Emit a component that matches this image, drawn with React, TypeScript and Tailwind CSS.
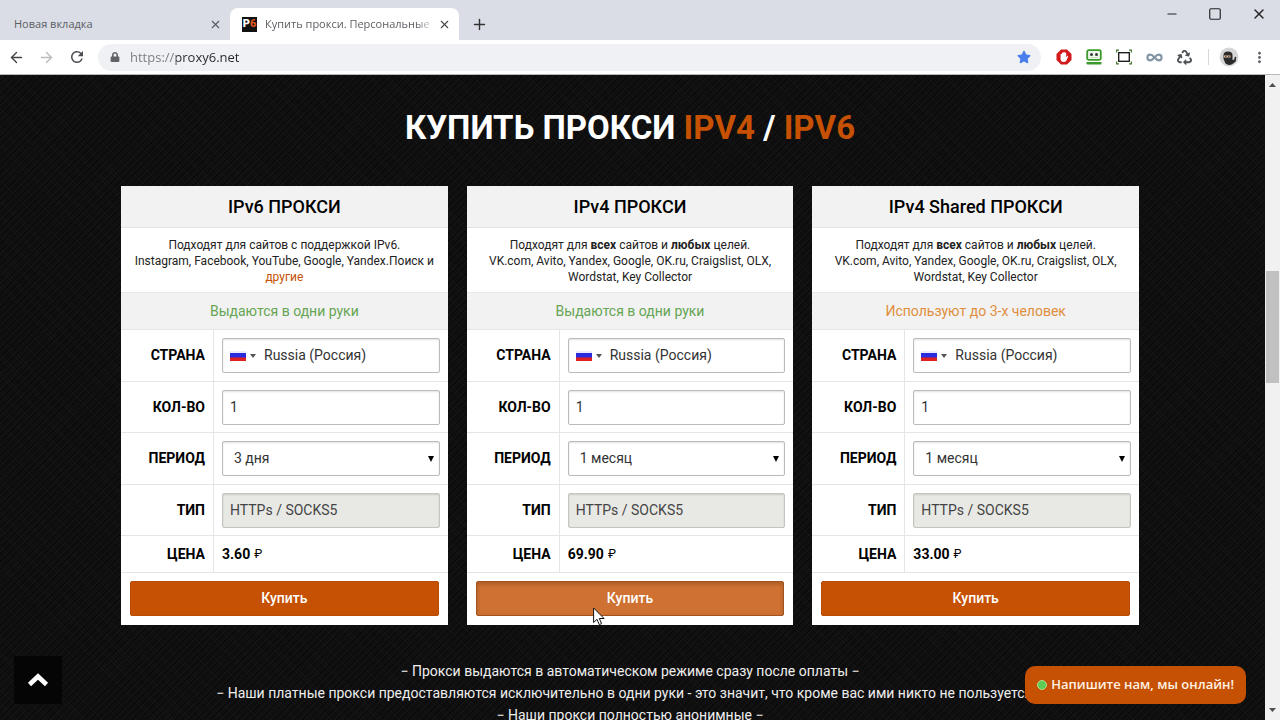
import type { ReactNode } from 'react'
import { ArrowLeft, ArrowRight, Infinity as InfinityIcon, Minus, Plus, Square, X } from 'lucide-react'
import { FaLock, FaRecycle, FaStar } from 'react-icons/fa'
import { MdMoreVert, MdRefresh } from 'react-icons/md'

type Offer = {
  id: string
  title: string
  description: ReactNode
  status: string
  shared?: boolean
  period: string
  price: string
  active?: boolean
}

const universal = (
  <>
    Подходят для <b>всех</b> сайтов и <b>любых</b> целей.
    <br />
    VK.com, Avito, Yandex, Google, OK.ru, Craigslist, OLX, Wordstat, Key Collector
  </>
)

const offers: Offer[] = [
  {
    id: 'ipv6',
    title: 'IPv6 ПРОКСИ',
    description: (
      <>
        Подходят для сайтов с поддержкой IPv6.
        <br />
        Instagram, Facebook, YouTube, Google, Yandex.Поиск и{' '}
        <a href="#sites" className="text-[#c65102]">
          другие
        </a>
      </>
    ),
    status: 'Выдаются в одни руки',
    period: '3 дня',
    price: '3.60',
  },
  {
    id: 'ipv4',
    title: 'IPv4 ПРОКСИ',
    description: universal,
    status: 'Выдаются в одни руки',
    period: '1 месяц',
    price: '69.90',
    active: true,
  },
  {
    id: 'shared',
    title: 'IPv4 Shared ПРОКСИ',
    description: universal,
    status: 'Используют до 3-х человек',
    shared: true,
    period: '1 месяц',
    price: '33.00',
  },
]

const field =
  'h-[35px] w-full rounded-xs border border-[#bbb] bg-white px-[7px] text-[#333] shadow-[inset_0_1px_2px_rgba(0,0,0,0.12)] outline-none'

function TabBar() {
  return (
    <header className="flex h-10 shrink-0 items-end bg-[#dadde6] text-[11px] text-[#5b5e63]">
      <div className="flex h-8 w-[230px] items-center justify-between pr-2 pl-[14px]">
        <span>Новая вкладка</span>
        <button type="button" aria-label="Закрыть вкладку">
          <X size={13} className="text-[#55585c]" />
        </button>
      </div>
      <div className="flex h-8 w-[229px] items-center rounded-t-lg bg-white pr-2 pl-3">
        <span className="flex size-[15px] shrink-0 items-center justify-center bg-[#111] font-['Roboto',sans-serif] text-[11px] font-black text-white">
          P<span className="text-[#d9531e]">6</span>
        </span>
        <span className="ml-2 min-w-0 flex-1 overflow-hidden mask-r-from-90% whitespace-nowrap">
          Купить прокси. Персональные а
        </span>
        <button type="button" aria-label="Закрыть вкладку" className="ml-1 shrink-0">
          <X size={13} className="text-[#44474b]" />
        </button>
      </div>
      <button type="button" aria-label="Новая вкладка" className="ml-3 flex h-8 items-center">
        <Plus size={17} className="text-[#333]" />
      </button>
      <div className="mb-[18px] ml-auto flex items-center gap-[29px] pr-[13px] text-[#222]">
        <button type="button" aria-label="Свернуть">
          <Minus size={14} strokeWidth={2} />
        </button>
        <button type="button" aria-label="Развернуть">
          <Square size={14} strokeWidth={2} />
        </button>
        <button type="button" aria-label="Закрыть">
          <X size={16} strokeWidth={2} />
        </button>
      </div>
    </header>
  )
}

function BlockerIcon() {
  return (
    <svg viewBox="0 0 16 16" className="size-4">
      <path d="M5 .5h6L15.5 5v6L11 15.5H5L.5 11V5z" fill="#d3191c" />
      <path
        d="M4.6 8.7V5.2q.7-.8 1.3 0V4q.7-.8 1.4 0v-.8q.8-.8 1.500 0V4q.8-.8 1.400 0v4.200l1-1.300q.8-.5 1.100.2l-1.900 4.500q-.8 1.500-2.600 1.500-3.200 0-3.200-3z"
        fill="#fff"
      />
    </svg>
  )
}

function RobotIcon() {
  return (
    <svg viewBox="0 0 16 16" className="size-4">
      <rect x="1.2" y="1.2" width="13.6" height="9.6" rx="1.5" fill="#eef7ea" stroke="#3a9a2b" strokeWidth="1.8" />
      <circle cx="5.5" cy="5.6" r="1.5" fill="#34383a" />
      <circle cx="10.5" cy="5.6" r="1.5" fill="#34383a" />
      <path d="M4 8.5h8" stroke="#c6dfbd" />
      <path d="M.5 13h15v1.6q0 .9-1 .9h-13q-1 0-1-.9z" fill="#3a9a2b" />
    </svg>
  )
}

function CaptureIcon() {
  return (
    <svg viewBox="0 0 16 16" className="size-4" fill="none">
      <rect x="2.7" y="3.7" width="10.6" height="8.6" stroke="#222" strokeWidth="1.4" />
      <path d="M.6 3.5V1.1H3M13 1.1h2.4v2.4M15.4 12.5v2.4H13M3 14.9H.6v-2.4" stroke="#4b7b35" strokeWidth="1.3" />
    </svg>
  )
}

function Avatar() {
  return (
    <svg viewBox="0 0 20 20" className="mr-3 ml-[10px] size-5">
      <circle cx="10" cy="10" r="9.5" fill="#d5d6d8" />
      <path d="M4.500 8Q4.500 4.500 9 4.500T13.500 8v5l1.600-.3.800-3 1.400.3-.6 4.500-3.200 2.500q-4 2-7-.5L4.500 12z" fill="#2b2b2c" />
      <path d="M5 8.500h6.500v2H5z" fill="#e4bd9c" />
      <path d="M6 9.200h1.400v.8H6zM9 9.200h1.400v.8H9z" fill="#222" />
    </svg>
  )
}

function Toolbar() {
  return (
    <nav
      aria-label="Панель навигации"
      className="flex h-[35px] shrink-0 items-center border-b border-[#b8b8b8] bg-white pr-3 pl-2 text-[#5f6368]"
    >
      <div className="flex items-center gap-[13px]">
        <button type="button" aria-label="Назад">
          <ArrowLeft size={17} className="text-[#444]" />
        </button>
        <button type="button" aria-label="Вперёд">
          <ArrowRight size={17} className="text-[#b9bbbe]" />
        </button>
        <button type="button" aria-label="Обновить">
          <MdRefresh size={18} className="text-[#4b4e52]" />
        </button>
      </div>
      <div className="ml-3 flex h-[27px] flex-1 items-center rounded-full bg-[#f0f1f4] pr-[10px] pl-3">
        <FaLock size={10} />
        <label htmlFor="address" className="sr-only">
          Адрес
        </label>
        <input
          id="address"
          defaultValue="https://proxy6.net"
          className="ml-[10px] h-6 min-w-0 flex-1 bg-[linear-gradient(90deg,#777b80_46px,#26282b_46px)] bg-clip-text text-[13px] text-transparent outline-none"
        />
        <FaStar size={14} className="text-[#4a7fee]" />
      </div>
      <div className="ml-[15px] flex items-center gap-[14px]">
        <BlockerIcon />
        <RobotIcon />
        <CaptureIcon />
        <InfinityIcon size={17} strokeWidth={3} className="text-[#8495a5]" />
        <FaRecycle size={15} className="text-[#4e5255]" />
      </div>
      <span className="ml-4 h-4 w-px bg-[#d7d9dc]" />
      <Avatar />
      <button type="button" aria-label="Меню">
        <MdMoreVert size={17} />
      </button>
    </nav>
  )
}

function Row({ label, htmlFor, children }: { label: string; htmlFor?: string; children: ReactNode }) {
  return (
    <div className="flex border-b border-[#e5e5e5]">
      <div className="flex w-[93px] shrink-0 items-center justify-end border-r border-[#e5e5e5] pr-2 text-[14px] font-bold text-black">
        {htmlFor ? <label htmlFor={htmlFor}>{label}</label> : label}
      </div>
      <div className="min-w-0 flex-1 px-2">{children}</div>
    </div>
  )
}

function OfferCard({ offer }: { offer: Offer }) {
  const { id } = offer
  return (
    <form className="min-w-0 flex-1 bg-white text-[14px] text-[#222]">
      <h2 className="border-b border-[#e2e2e2] bg-[#f2f2f2] py-2 text-center text-[18px] leading-[25px] font-medium text-black">
        {offer.title}
      </h2>
      <p className="border-b border-[#e8e8e8] px-2 pt-[9px] pb-[7px] text-center text-[12px] leading-4">
        {offer.description}
      </p>
      <p
        className={`border-b border-[#e5e5e5] bg-[#f2f2f2] py-2 text-center leading-5 ${offer.shared ? 'text-[#e08e3c]' : 'text-[#65a554]'}`}
      >
        {offer.status}
      </p>
      <Row label="СТРАНА" htmlFor={`${id}-country`}>
        <div className="flex h-[51px] items-center">
          <div className={`flex items-center ${field}`}>
            <button type="button" aria-label="Выбрать страну" className="flex shrink-0 items-center gap-1">
              <svg viewBox="0 0 16 10" className="h-[10px] w-4">
                <path d="M0 0h16v4H0z" fill="#eceaf4" />
                <path d="M0 2h16v5H0z" fill="#2a2adf" />
                <path d="M0 6.500h16V10H0z" fill="#e02020" />
              </svg>
              <svg viewBox="0 0 6 4" className="h-1 w-[6px]">
                <path d="M0 0h6L3 4z" fill="#555" />
              </svg>
            </button>
            <input
              id={`${id}-country`}
              defaultValue="Russia (Россия)"
              className="ml-2 w-full min-w-0 bg-transparent outline-none"
            />
          </div>
        </div>
      </Row>
      <Row label="КОЛ-ВО" htmlFor={`${id}-count`}>
        <div className="flex h-[50px] items-center">
          <input id={`${id}-count`} defaultValue="1" className={field} />
        </div>
      </Row>
      <Row label="ПЕРИОД" htmlFor={`${id}-period`}>
        <div className="relative flex h-[51px] items-center">
          <select id={`${id}-period`} className={`appearance-none indent-1 ${field}`}>
            <option>{offer.period}</option>
          </select>
          <svg viewBox="0 0 6 6" className="pointer-events-none absolute right-[6px] size-[6px]">
            <path d="M0 0h6L3 6z" fill="#000" />
          </svg>
        </div>
      </Row>
      <Row label="ТИП" htmlFor={`${id}-type`}>
        <div className="flex h-[50px] items-center">
          <input
            id={`${id}-type`}
            defaultValue="HTTPs / SOCKS5"
            readOnly
            className="h-[35px] w-full rounded-xs border border-[#c4c5c1] bg-[#e8e9e4] px-[7px] text-[#444] shadow-[inset_0_1px_2px_rgba(0,0,0,0.12)] outline-none"
          />
        </div>
      </Row>
      <Row label="ЦЕНА">
        <p className="flex h-9 items-center gap-1 font-bold text-black">
          {offer.price} <span className="text-[12px] font-normal">₽</span>
        </p>
      </Row>
      <div className="px-[9px] pt-2 pb-[9px]">
        <button
          type="button"
          className={`h-[35px] w-full rounded-xs border font-medium text-white ${
            offer.active
              ? 'border-[#a3531f] bg-[#cf7132] shadow-[inset_0_2px_4px_rgba(0,0,0,0.2)]'
              : 'border-[#b94c02] bg-[#c65102]'
          }`}
        >
          Купить
        </button>
      </div>
    </form>
  )
}

function Scrollbar() {
  return (
    <div className="flex w-[15px] shrink-0 flex-col items-center bg-[#f1f1f1] py-2">
      <svg viewBox="0 0 7 4" className="h-1 w-[7px] shrink-0">
        <path d="M0 4h7L3.500 0z" fill="#505050" />
      </svg>
      <div className="basis-[184px]" />
      <div className="h-[112px] w-[13px] bg-[#c1c1c1]" />
      <div className="flex-1" />
      <svg viewBox="0 0 7 4" className="h-1 w-[7px] shrink-0">
        <path d="M0 0h7L3.500 4z" fill="#505050" />
      </svg>
    </div>
  )
}

export default function App() {
  return (
    <div className="flex h-screen flex-col overflow-hidden font-['Open_Sans','Noto_Sans',sans-serif]">
      <TabBar />
      <Toolbar />
      <div className="flex min-h-0 flex-1">
        <main className="relative min-w-0 flex-1 overflow-hidden bg-[#0f0f0f] bg-[repeating-linear-gradient(45deg,#ffffff06_0px,#ffffff06_1px,transparent_1px,transparent_3px),repeating-linear-gradient(-45deg,#00000044_0px,#00000044_2px,transparent_2px,transparent_5px)] pr-[5px] font-['Roboto',sans-serif]">
          <h1 className="pt-8 text-center text-[33px] leading-[42px] font-bold text-white">
            КУПИТЬ ПРОКСИ <span className="text-[#c65102]">IPV4</span> / <span className="text-[#c65102]">IPV6</span>
          </h1>
          <div className="relative mx-auto mt-[37px] flex max-w-[1018px] gap-[19px]">
            {offers.map((offer) => (
              <OfferCard key={offer.id} offer={offer} />
            ))}
            <svg viewBox="0 0 12 19" className="pointer-events-none absolute -bottom-px left-[472px] h-[19px] w-3">
              <path
                d="M.6 1v14.500l3.400-3.200 2.300 5.300 2.300-1-2.300-5.100h4.800z"
                fill="#fff"
                stroke="#111"
                strokeWidth="1"
              />
            </svg>
          </div>
          <div className="mt-[35px] text-center text-[14px] leading-[22px] whitespace-nowrap text-[#eee]">
            <p>− Прокси выдаются в автоматическом режиме сразу после оплаты −</p>
            <p>− Наши платные прокси предоставляются исключительно в одни руки - это значит, что кроме вас ими никто не пользуется −</p>
            <p>− Наши прокси полностью анонимные −</p>
          </div>
          <button
            type="button"
            aria-label="Наверх"
            className="absolute bottom-4 left-[14px] flex size-12 items-center justify-center bg-[#050505] text-white"
          >
            <svg viewBox="0 0 22 14" className="h-[14px] w-[22px]" fill="none">
              <path d="M2.500 11.500L11 3.500l8.500 8" stroke="currentColor" strokeWidth="4.600" />
            </svg>
          </button>
          <button
            type="button"
            className="absolute right-[19px] bottom-4 flex h-[38px] items-center gap-1 rounded-[10px] bg-[#c65102] px-3 font-['Open_Sans','Noto_Sans',sans-serif] text-[13px] font-semibold text-[#fff1e6]"
          >
            <span className="size-[10px] rounded-full border border-[#b6dd8c] bg-[#5fca55]" />
            Напишите нам, мы онлайн!
          </button>
        </main>
        <Scrollbar />
      </div>
    </div>
  )
}
